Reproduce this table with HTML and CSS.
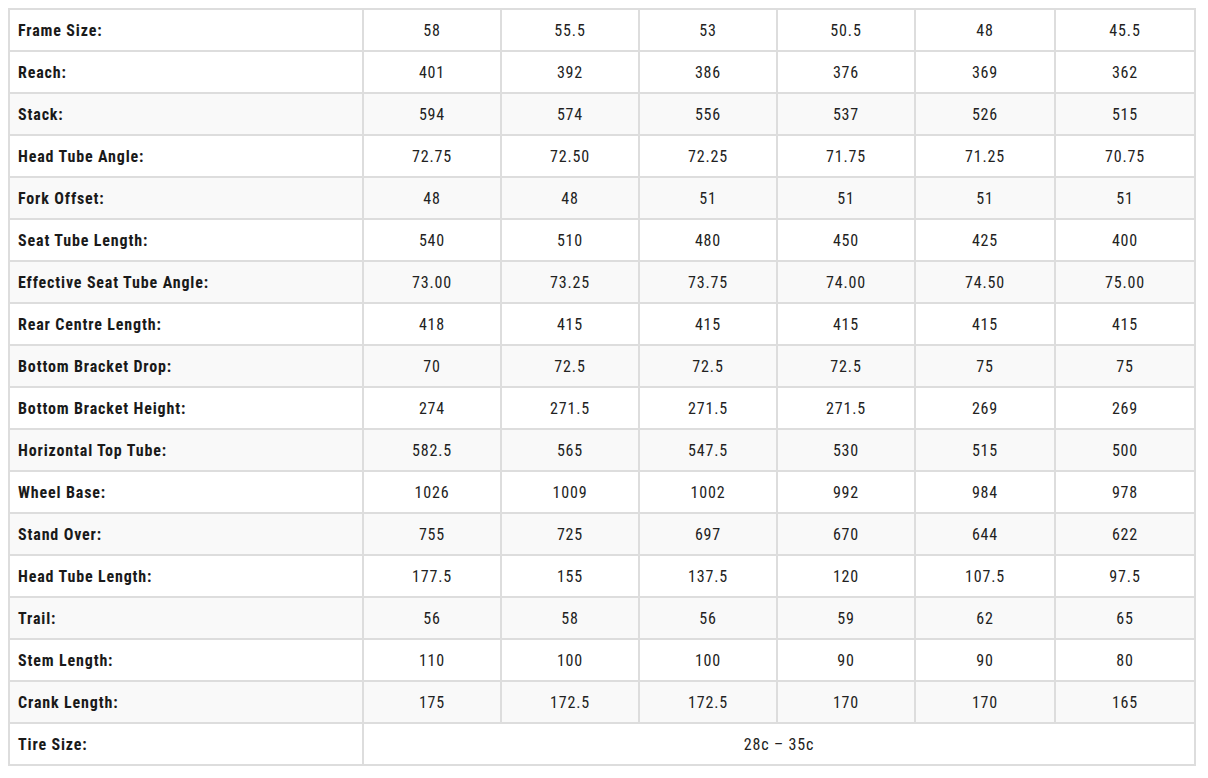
FILE: index.html
```html
<!DOCTYPE html>
<html>
<head>
<meta charset="utf-8">
<link rel="stylesheet" href="styles.css">
</head>
<body>
<table class="geo">
<colgroup>
<col class="c-label"><col class="c-a"><col class="c-a"><col class="c-a"><col class="c-a"><col class="c-b"><col class="c-b">
</colgroup>
<thead>
<tr><th>Frame Size:</th><td>58</td><td>55.5</td><td>53</td><td>50.5</td><td>48</td><td>45.5</td></tr>
</thead>
<tbody>
<tr><th>Reach:</th><td>401</td><td>392</td><td>386</td><td>376</td><td>369</td><td>362</td></tr>
<tr><th>Stack:</th><td>594</td><td>574</td><td>556</td><td>537</td><td>526</td><td>515</td></tr>
<tr><th>Head Tube Angle:</th><td>72.75</td><td>72.50</td><td>72.25</td><td>71.75</td><td>71.25</td><td>70.75</td></tr>
<tr><th>Fork Offset:</th><td>48</td><td>48</td><td>51</td><td>51</td><td>51</td><td>51</td></tr>
<tr><th>Seat Tube Length:</th><td>540</td><td>510</td><td>480</td><td>450</td><td>425</td><td>400</td></tr>
<tr><th>Effective Seat Tube Angle:</th><td>73.00</td><td>73.25</td><td>73.75</td><td>74.00</td><td>74.50</td><td>75.00</td></tr>
<tr><th>Rear Centre Length:</th><td>418</td><td>415</td><td>415</td><td>415</td><td>415</td><td>415</td></tr>
<tr><th>Bottom Bracket Drop:</th><td>70</td><td>72.5</td><td>72.5</td><td>72.5</td><td>75</td><td>75</td></tr>
<tr><th>Bottom Bracket Height:</th><td>274</td><td>271.5</td><td>271.5</td><td>271.5</td><td>269</td><td>269</td></tr>
<tr><th>Horizontal Top Tube:</th><td>582.5</td><td>565</td><td>547.5</td><td>530</td><td>515</td><td>500</td></tr>
<tr><th>Wheel Base:</th><td>1026</td><td>1009</td><td>1002</td><td>992</td><td>984</td><td>978</td></tr>
<tr><th>Stand Over:</th><td>755</td><td>725</td><td>697</td><td>670</td><td>644</td><td>622</td></tr>
<tr><th>Head Tube Length:</th><td>177.5</td><td>155</td><td>137.5</td><td>120</td><td>107.5</td><td>97.5</td></tr>
<tr><th>Trail:</th><td>56</td><td>58</td><td>56</td><td>59</td><td>62</td><td>65</td></tr>
<tr><th>Stem Length:</th><td>110</td><td>100</td><td>100</td><td>90</td><td>90</td><td>80</td></tr>
<tr><th>Crank Length:</th><td>175</td><td>172.5</td><td>172.5</td><td>170</td><td>170</td><td>165</td></tr>
<tr><th>Tire Size:</th><td colspan="6">28c – 35c</td></tr>
</tbody>
</table>
</body>
</html>
```
FILE: styles.css
```css
html, body {
  background: #fff;
}
body {
  margin: 8px;
  font-family: "Roboto Condensed", Roboto, "Liberation Sans", sans-serif;
  font-stretch: condensed;
  color: #222;
}
.geo {
  border-collapse: collapse;
  table-layout: fixed;
  width: 1188px;
  border: 2px solid #dddddd;
}
.c-label { width: 354px; }
.c-a { width: 138px; }
.c-b { width: 140px; }
.geo th,
.geo td {
  border: 2px solid #dddddd;
  height: 39px;
  padding: 1px 8px 0;
  box-sizing: content-box;
  font-size: 16px;
  letter-spacing: 0.85px;
  line-height: 20px;
  vertical-align: middle;
}
.geo th {
  text-align: left;
  font-weight: bold;
  color: #1a1a1a;
}
.geo td {
  text-align: center;
  font-weight: normal;
  color: #222;
}
.geo tbody tr:nth-child(even) {
  background: #f9f9f9;
}
```
